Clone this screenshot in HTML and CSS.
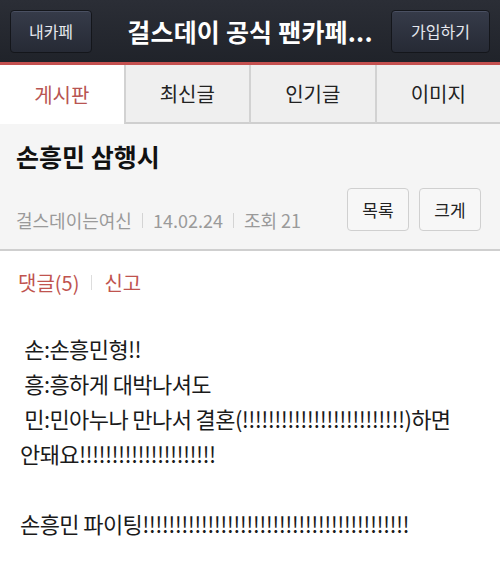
FILE: index.html
```html
<!DOCTYPE html>
<html>
    <link rel="stylesheet" href="styles.css">
    <head>
        <title>손흥민 삼행시</title>
    </head>
    <body>
        <div class="topbar">
            <button class="top-button">내카페</button>
            <div class="cafe-title">걸스데이 공식 팬카페...</div>
            <button class="top-button join">가입하기</button>
        </div>
        <div class="tabs">
            <div class="tab active">게시판</div>
            <div class="tab">최신글</div>
            <div class="tab">인기글</div>
            <div class="tab">이미지</div>
        </div>
        <div class="post-head">
            <div class="post-title">손흥민 삼행시</div>
            <div class="post-info">
                <div class="meta">
                    <span>걸스데이는여신</span>
                    <span class="bar"></span>
                    <span>14.02.24</span>
                    <span class="bar"></span>
                    <span>조회 21</span>
                </div>
                <div class="post-buttons">
                    <button class="small-button">목록</button>
                    <button class="small-button">크게</button>
                </div>
            </div>
        </div>
        <div class="comments">
            <span>댓글(5)</span>
            <span class="bar"></span>
            <span>신고</span>
        </div>
        <div class="post-body">
            <p>&nbsp;손:손흥민형!!</p>
            <p>&nbsp;흥:흥하게 대박나셔도</p>
            <p>&nbsp;민:민아누나 만나서 결혼(!!!!!!!!!!!!!!!!!!!!!!!!!)하면 안돼요!!!!!!!!!!!!!!!!!!!!!</p>
            <p>&nbsp;</p>
            <p>손흥민 파이팅!!!!!!!!!!!!!!!!!!!!!!!!!!!!!!!!!!!!!!!!!</p>
        </div>
    </body>
</html>
```

FILE: styles.css
```css
body {
    margin: 0;
    background: #fff;
    font-family: "Noto Sans CJK KR", "Noto Sans", sans-serif;
}
.topbar {
    height: 62px;
    padding: 0 10px;
    display: grid;
    grid-template-columns: 1fr auto 1fr;
    align-items: center;
    background: linear-gradient(to bottom, #2b2e36, #20232a);
    border-bottom: 3px solid #c4504f;
}
.top-button {
    height: 43px;
    width: 82px;
    border: 1px solid #14161b;
    border-radius: 4px;
    background: linear-gradient(to bottom, #363b49, #262a35);
    box-shadow: inset 0 1px 0 #4a5062;
    color: #e6e8ee;
    font-family: inherit;
    font-size: 16px;
}
.join {
    width: 99px;
    justify-self: end;
}
.cafe-title {
    color: #fff;
    font-size: 25px;
    font-weight: bold;
    letter-spacing: 0.2px;
}
.tabs {
    display: flex;
    height: 59px;
}
.tab {
    flex: 1;
    display: flex;
    align-items: center;
    justify-content: center;
    background: #efefef;
    border-left: 2px solid #d2d2d2;
    border-bottom: 2px solid #cfcfcf;
    font-size: 20px;
    color: #222;
}
.tab.active {
    background: #fff;
    border-left: none;
    border-bottom: none;
    color: #b85552;
}
.post-head {
    background: #f5f5f5;
    padding: 16px 19px 0 16px;
    height: 109px;
    border-bottom: 2px solid #cfcfcf;
}
.post-title {
    font-size: 25px;
    font-weight: bold;
    color: #111;
    line-height: 32px;
}
.post-info {
    margin-top: 13px;
    display: flex;
    align-items: center;
    justify-content: space-between;
}
.meta {
    display: flex;
    align-items: center;
    gap: 10px;
    padding-top: 22px;
    font-size: 18px;
    color: #9a9a9a;
}
.bar {
    width: 1px;
    height: 15px;
    background: #d4d4d4;
}
.post-buttons {
    display: flex;
    gap: 10px;
}
.small-button {
    width: 62px;
    height: 43px;
    border: 1px solid #d0d0d0;
    border-radius: 4px;
    background: #f7f7f7;
    font-family: inherit;
    font-size: 17px;
    color: #222;
}
.comments {
    display: flex;
    align-items: center;
    gap: 12px;
    padding: 17px 18px 0;
    font-size: 20px;
    color: #c0544f;
}
.comments .bar {
    background: #ddd;
}
.post-body {
    padding: 34px 20px 0 20px;
    font-size: 22px;
    color: #1a1a1a;
    word-break: keep-all;
}
.post-body p {
    margin: 0;
    line-height: 35px;
    letter-spacing: -0.6px;
}
```
